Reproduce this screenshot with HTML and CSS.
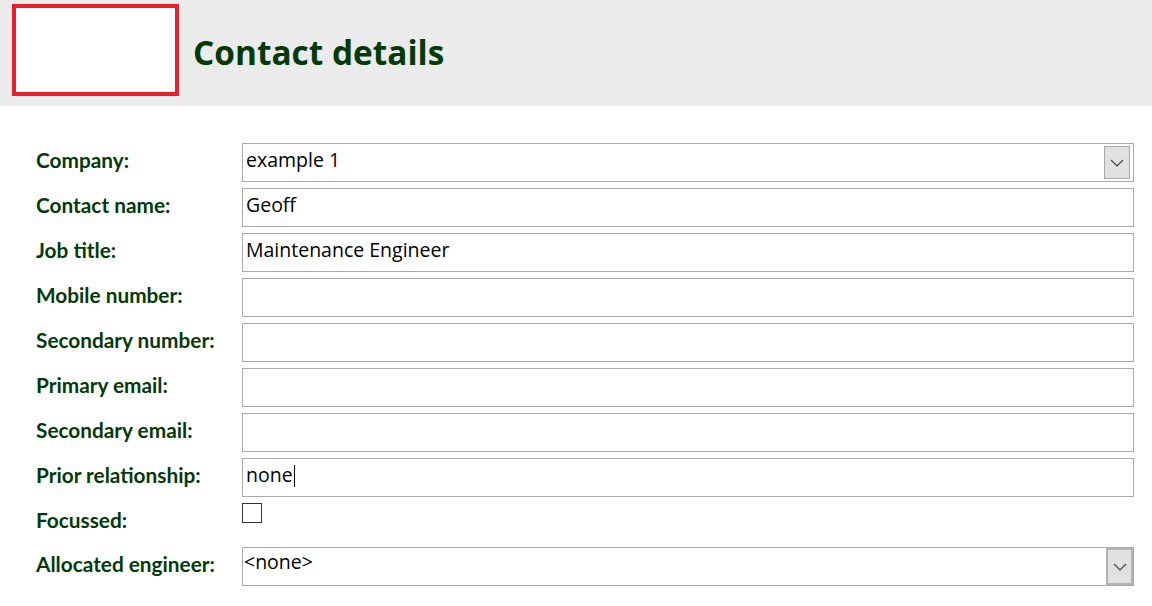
FILE: index.html
```html
<!DOCTYPE html>
<html>
<head>
<meta charset="utf-8">
<link rel="stylesheet" href="styles.css">
</head>
<body>
<header class="header">
  <div class="logo"></div>
  <h1 class="title">Contact details</h1>
</header>
<main class="form">
  <div class="row">
    <label class="label">Company:</label>
    <div class="field select"><span class="value">example 1</span><span class="btn"><svg width="14" height="8" viewBox="0 0 14 8"><path d="M1 1 L7 7 L13 1" fill="none" stroke="#444" stroke-width="1.2"/></svg></span></div>
  </div>
  <div class="row">
    <label class="label">Contact name:</label>
    <div class="field"><span class="value">Geoff</span></div>
  </div>
  <div class="row">
    <label class="label">Job title:</label>
    <div class="field"><span class="value">Maintenance Engineer</span></div>
  </div>
  <div class="row">
    <label class="label">Mobile number:</label>
    <div class="field"></div>
  </div>
  <div class="row">
    <label class="label">Secondary number:</label>
    <div class="field"></div>
  </div>
  <div class="row">
    <label class="label">Primary email:</label>
    <div class="field"></div>
  </div>
  <div class="row">
    <label class="label">Secondary email:</label>
    <div class="field"></div>
  </div>
  <div class="row">
    <label class="label">Prior relationship:</label>
    <div class="field"><span class="value">none</span><span class="caret"></span></div>
  </div>
  <div class="row short">
    <label class="label">Focussed:</label>
    <div class="check-cell"><span class="checkbox"></span></div>
  </div>
  <div class="row">
    <label class="label">Allocated engineer:</label>
    <div class="field select alt"><span class="value">&lt;none&gt;</span><span class="btn"><svg width="14" height="8" viewBox="0 0 14 8"><path d="M1 1 L7 7 L13 1" fill="none" stroke="#444" stroke-width="1.2"/></svg></span></div>
  </div>
</main>
</body>
</html>
```
FILE: styles.css
```css
html, body {
  margin: 0;
  padding: 0;
  background: #ffffff;
}
.header {
  height: 106px;
  background: #ebebeb;
  display: flex;
  align-items: flex-start;
}
.logo {
  box-sizing: border-box;
  width: 167px;
  height: 92px;
  margin: 4px 0 0 12px;
  border: 4px solid #e8202b;
  background: #ffffff;
}
.title {
  margin: 30px 0 0 14px;
  font-family: "Open Sans", sans-serif;
  font-weight: 700;
  font-size: 33.4px;
  line-height: 44px;
  color: #033a08;
  letter-spacing: 0;
}
.form {
  padding: 37px 18px 0 36px;
  display: flex;
  flex-direction: column;
  gap: 6px;
}
.row {
  display: flex;
  height: 39px;
}
.row.short {
  height: 38px;
}
.label {
  width: 206px;
  flex: none;
  font-family: "Lato", sans-serif;
  font-weight: 700;
  font-size: 20.8px;
  color: #033a08;
  line-height: 33px;
}
.field {
  box-sizing: border-box;
  flex: 1;
  height: 39px;
  border: 1px solid #a9a9a9;
  display: flex;
  align-items: center;
  padding-left: 3px;
  font-family: "Open Sans", sans-serif;
  font-size: 19.5px;
  color: #000;
}
.value {
  line-height: 30px;
  padding-bottom: 5px;
}
.caret {
  display: inline-block;
  width: 1px;
  height: 22px;
  background: #000;
  margin-left: 1px;
  margin-bottom: 3px;
}
.select {
  justify-content: space-between;
  padding-right: 3px;
}
.btn {
  box-sizing: border-box;
  width: 26px;
  height: 33px;
  background: #e1e1e1;
  border: 1px solid #a9a9a9;
  display: flex;
  align-items: center;
  justify-content: center;
}
.select.alt {
  padding-left: 1px;
  padding-right: 0;
  align-items: stretch;
}
.select.alt .value {
  line-height: 28px;
  padding-bottom: 0;
}
.select.alt .btn {
  height: auto;
  border: 2px solid #b3b3b3;
  width: 27px;
}
.check-cell {
  flex: 1;
}
.checkbox {
  display: block;
  box-sizing: border-box;
  width: 20px;
  height: 20px;
  border: 1px solid #333;
  background: #fff;
}
```
